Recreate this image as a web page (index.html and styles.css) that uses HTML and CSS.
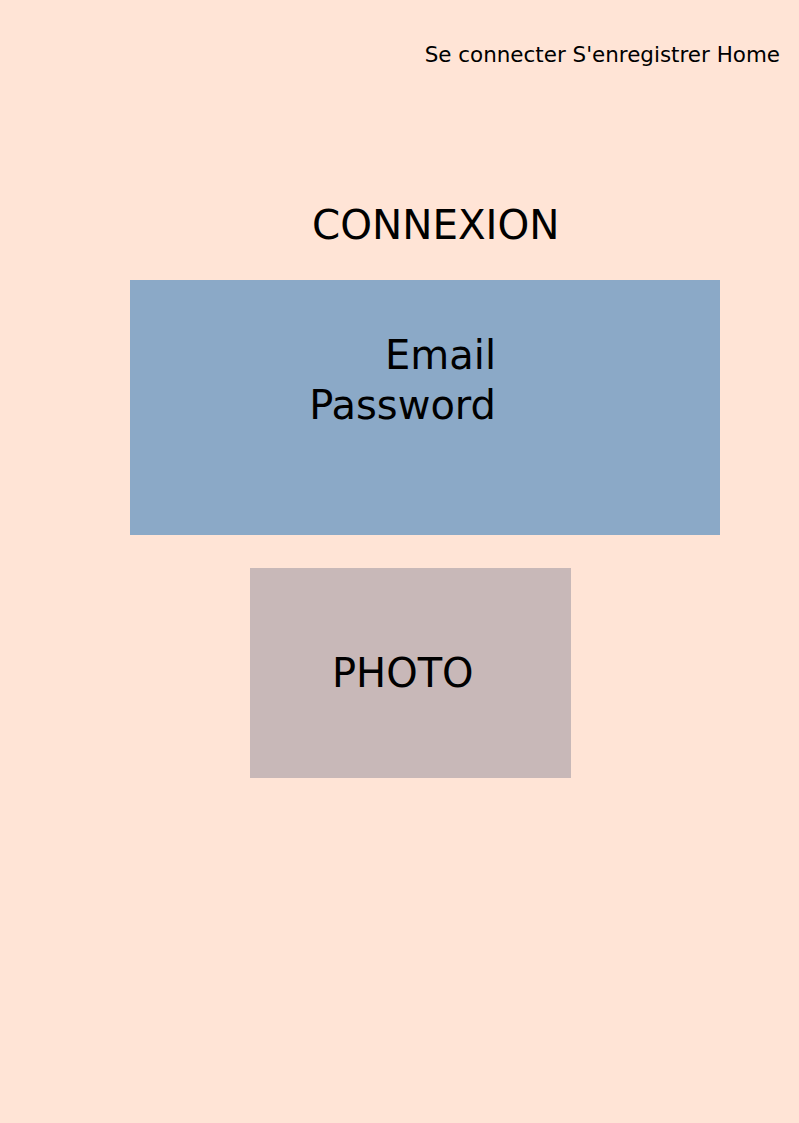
FILE: index.html
```html
<!DOCTYPE html>
<html lang="fr">
<head>
  <meta charset="UTF-8" />
  <meta name="viewport" content="width=device-width, initial-scale=1.0"/>
  <title>Connexion</title>
  <link rel="stylesheet" href="styles.css">
</head>
<body>

  <nav class="top-nav">
    <a href="#">Se connecter</a>
    <a href="#">S'enregistrer</a>
    <a href="#">Home</a>
  </nav>

  <h1 class="title">CONNEXION</h1>

  <div class="login-box">
    <div class="labels">
      <div>Email</div>
      <div>Password</div>
    </div>
  </div>

  <div class="photo-box">PHOTO</div>

</body>
</html>
```

FILE: styles.css
```css
body {
  font-family: "DejaVu Sans", Verdana, sans-serif;
  background-color: #ffe4d6;
  color: #000;
  margin: 0;
  height: 1123px;
}

/* Navigation */
.top-nav {
  text-align: right;
  padding: 43px 19px 0 0;
  font-size: 21.45px;
  line-height: 24px;
  height: 24px;
}

.top-nav a {
  color: #000;
  text-decoration: none;
}

.title {
  font-weight: normal;
  font-size: 40.4px;
  line-height: 50px;
  margin: 0;
  padding: 133px 0 0 312px;
}

.login-box {
  background-color: #8ba9c7;
  margin: 30px 0 0 130px;
  width: 590px;
  height: 255px;
  box-sizing: border-box;
  padding-top: 50px;
}

.labels {
  width: 366px;
  text-align: right;
  font-size: 40px;
  line-height: 50px;
}

.photo-box {
  background-color: #c8b8b8;
  margin: 33px 0 0 250px;
  width: 321px;
  height: 210px;
  box-sizing: border-box;
  padding-left: 82px;
  display: flex;
  align-items: center;
  font-size: 40px;
  line-height: 50px;
}
```
